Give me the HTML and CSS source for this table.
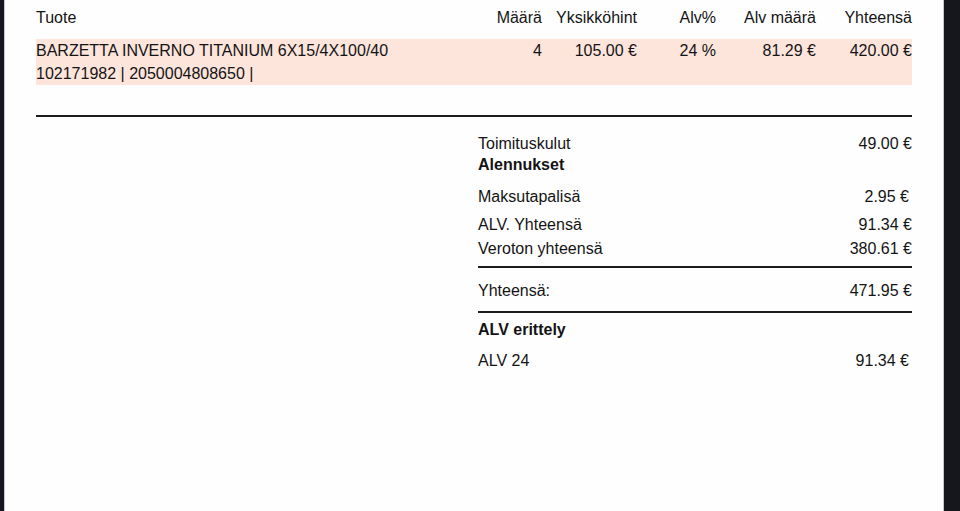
FILE: index.html
```html
<!DOCTYPE html>
<html lang="fi">
<head>
<meta charset="utf-8">
<title>Lasku</title>
<link rel="stylesheet" href="styles.css">
</head>
<body>
<div class="page">
  <div class="row head">
    <span class="c-name">Tuote</span>
    <span>Määrä</span>
    <span>Yksikköhint</span>
    <span>Alv%</span>
    <span>Alv määrä</span>
    <span>Yhteensä</span>
  </div>
  <div class="row item">
    <div class="c-name">BARZETTA INVERNO TITANIUM 6X15/4X100/40<br>102171982 | 2050004808650 |</div>
    <span>4</span>
    <span>105.00 €</span>
    <span>24 %</span>
    <span>81.29 €</span>
    <span>420.00 €</span>
  </div>
  <div class="rule rule-main"></div>
  <div class="summary">
    <div class="srow s-first"><span>Toimituskulut</span><span>49.00 €</span></div>
    <div class="srow bold"><span>Alennukset</span></div>
    <div class="srow s-fee"><span>Maksutapalisä</span><span class="inset">2.95 €</span></div>
    <div class="srow s-vat"><span>ALV. Yhteensä</span><span>91.34 €</span></div>
    <div class="srow s-net"><span>Veroton yhteensä</span><span>380.61 €</span></div>
    <div class="rule rule-a"></div>
    <div class="srow s-total"><span>Yhteensä:</span><span>471.95 €</span></div>
    <div class="rule rule-b"></div>
    <div class="srow bold s-spec"><span>ALV erittely</span></div>
    <div class="srow s-alv"><span>ALV 24</span><span class="inset">91.34 €</span></div>
  </div>
</div>
</body>
</html>
```

FILE: styles.css
```css
* { box-sizing: border-box; }
html, body {
  margin: 0;
  padding: 0;
  height: 100%;
}
body {
  background: #15171c;
  font-family: "Liberation Sans", Arial, sans-serif;
  font-size: 16px;
  color: #141414;
  overflow: hidden;
}
.page {
  margin-left: 4px;
  width: 940px;
  height: 511px;
  background: #fefefe;
  border-left: 1px solid #c8c8c8;
  border-right: 1px solid #c8c8c8;
  padding: 6px 31px 0 31px;
}
.row {
  display: grid;
  grid-template-columns: 1fr 60px 95px 79px 100px 96px;
  text-align: right;
  line-height: 23px;
}
.c-name { text-align: left; }
.item {
  margin-top: 10px;
  background: #fde5dc;
}
.rule {
  height: 2px;
  background: #1c1c1c;
}
.rule-main { margin-top: 30px; }
.summary {
  margin-left: 442px;
}
.srow {
  display: flex;
  justify-content: space-between;
  line-height: 21px;
}
.bold { font-weight: bold; }
.inset { padding-right: 3px; }
.s-first { margin-top: 16px; }
.s-fee { margin-top: 11px; }
.s-vat { margin-top: 7px; }
.s-net { margin-top: 3px; }
.rule-a { margin-top: 7px; }
.s-total { margin-top: 12px; }
.rule-b { margin-top: 10px; }
.s-spec { margin-top: 6px; }
.s-alv { margin-top: 10px; }
```
